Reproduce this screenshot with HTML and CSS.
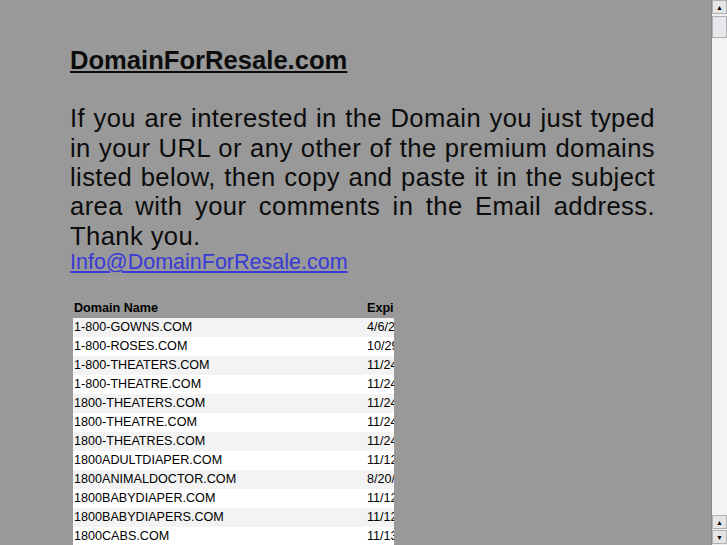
FILE: index.html
```html
<!DOCTYPE html>
<html lang="en">
<head>
    <meta charset="UTF-8">
    <title>DomainForResale.com</title>
    <link rel="stylesheet" href="styles.css">
</head>
<body>
    <div class="page">
        <h1 class="title">DomainForResale.com</h1>

        <p class="intro">If you are interested in the Domain you just typed in your URL or any other of the premium domains listed below, then copy and paste it in the subject area with your comments in the Email address. Thank you.</p>
        <a class="mail" href="mailto:Info@DomainForResale.com">Info@DomainForResale.com</a>

        <!-- domain list, clipped like the original frame -->
        <div class="listing">
            <table class="domains">
                <thead>
                    <tr>
                        <th class="col-name">Domain Name</th>
                        <th>Expiration Date</th>
                    </tr>
                </thead>
                <tbody>
                    <tr><td>1-800-GOWNS.COM</td><td>4/6/2012</td></tr>
                    <tr><td>1-800-ROSES.COM</td><td>10/29/2011</td></tr>
                    <tr><td>1-800-THEATERS.COM</td><td>11/24/2011</td></tr>
                    <tr><td>1-800-THEATRE.COM</td><td>11/24/2011</td></tr>
                    <tr><td>1800-THEATERS.COM</td><td>11/24/2011</td></tr>
                    <tr><td>1800-THEATRE.COM</td><td>11/24/2011</td></tr>
                    <tr><td>1800-THEATRES.COM</td><td>11/24/2011</td></tr>
                    <tr><td>1800ADULTDIAPER.COM</td><td>11/12/2011</td></tr>
                    <tr><td>1800ANIMALDOCTOR.COM</td><td>8/20/2012</td></tr>
                    <tr><td>1800BABYDIAPER.COM</td><td>11/12/2011</td></tr>
                    <tr><td>1800BABYDIAPERS.COM</td><td>11/12/2011</td></tr>
                    <tr><td>1800CABS.COM</td><td>11/13/2011</td></tr>
                    <tr><td>1800CARWASH.COM</td><td>11/13/2011</td></tr>
                </tbody>
            </table>
        </div>
    </div>

    <!-- old style window scrollbar -->
    <div class="scrollbar">
        <div class="sb-btn">&#9650;</div>
        <div class="sb-thumb"></div>
        <div class="sb-track"></div>
        <div class="sb-btn">&#9650;</div>
        <div class="sb-btn">&#9660;</div>
    </div>
</body>
</html>
```

FILE: styles.css
```css
/* Global styles */
html, body {
    height: 100%;
    overflow: hidden;
}

body {
    margin: 0;
    background-color: #999999;
    font-family: "Liberation Sans", Arial, sans-serif;
    color: #0c0c0c;
}

/* Page column */
.page {
    width: 585px;
    padding: 46px 0 0 70px;
}

.title {
    margin: 0 0 29px;
    font-size: 25.6px;
    font-weight: bold;
    line-height: 29.4px;
    text-decoration: underline;
}

.intro {
    margin: 0;
    font-size: 25.6px;
    line-height: 29.3px;
    letter-spacing: 0.4px;
    text-align: justify;
}

.mail {
    display: block;
    font-size: 21.5px;
    line-height: 23px;
    color: #3a3ad6;
}

/* Domain list */
.listing {
    width: 321px;
    margin: 24px 0 0 3px;
    overflow: hidden;
}

.domains {
    width: 520px;
    border-collapse: collapse;
    font-size: 12.6px;
    color: #000;
}

.domains th,
.domains td {
    padding: 0 0 0 1px;
    height: 19px;
    text-align: left;
    white-space: nowrap;
}

.domains th {
    height: 20px;
    font-weight: bold;
}

.domains .col-name {
    width: 292px;
}

.domains tbody tr:nth-child(odd) {
    background-color: #f3f3f3;
}

.domains tbody tr:nth-child(even) {
    background-color: #fff;
}

/* Scrollbar */
.scrollbar {
    position: fixed;
    top: 0;
    right: 0;
    width: 15px;
    height: 100%;
    display: flex;
    flex-direction: column;
    background-color: #eeeeee;
    border-left: 1px solid #8a8a8a;
}

.sb-btn {
    height: 14px;
    margin: 0 0 1px;
    background-color: #e4e4e4;
    border: 1px solid #b0b0b0;
    font-size: 7px;
    line-height: 14px;
    text-align: center;
    color: #000;
    box-sizing: border-box;
}

.sb-thumb {
    height: 22px;
    margin: 1px 0;
    background-color: #e8e8ec;
    border: 1px solid #b0b0b0;
    box-sizing: border-box;
}

.sb-track {
    flex: 1;
    background-color: #f4f4f4;
}
```
